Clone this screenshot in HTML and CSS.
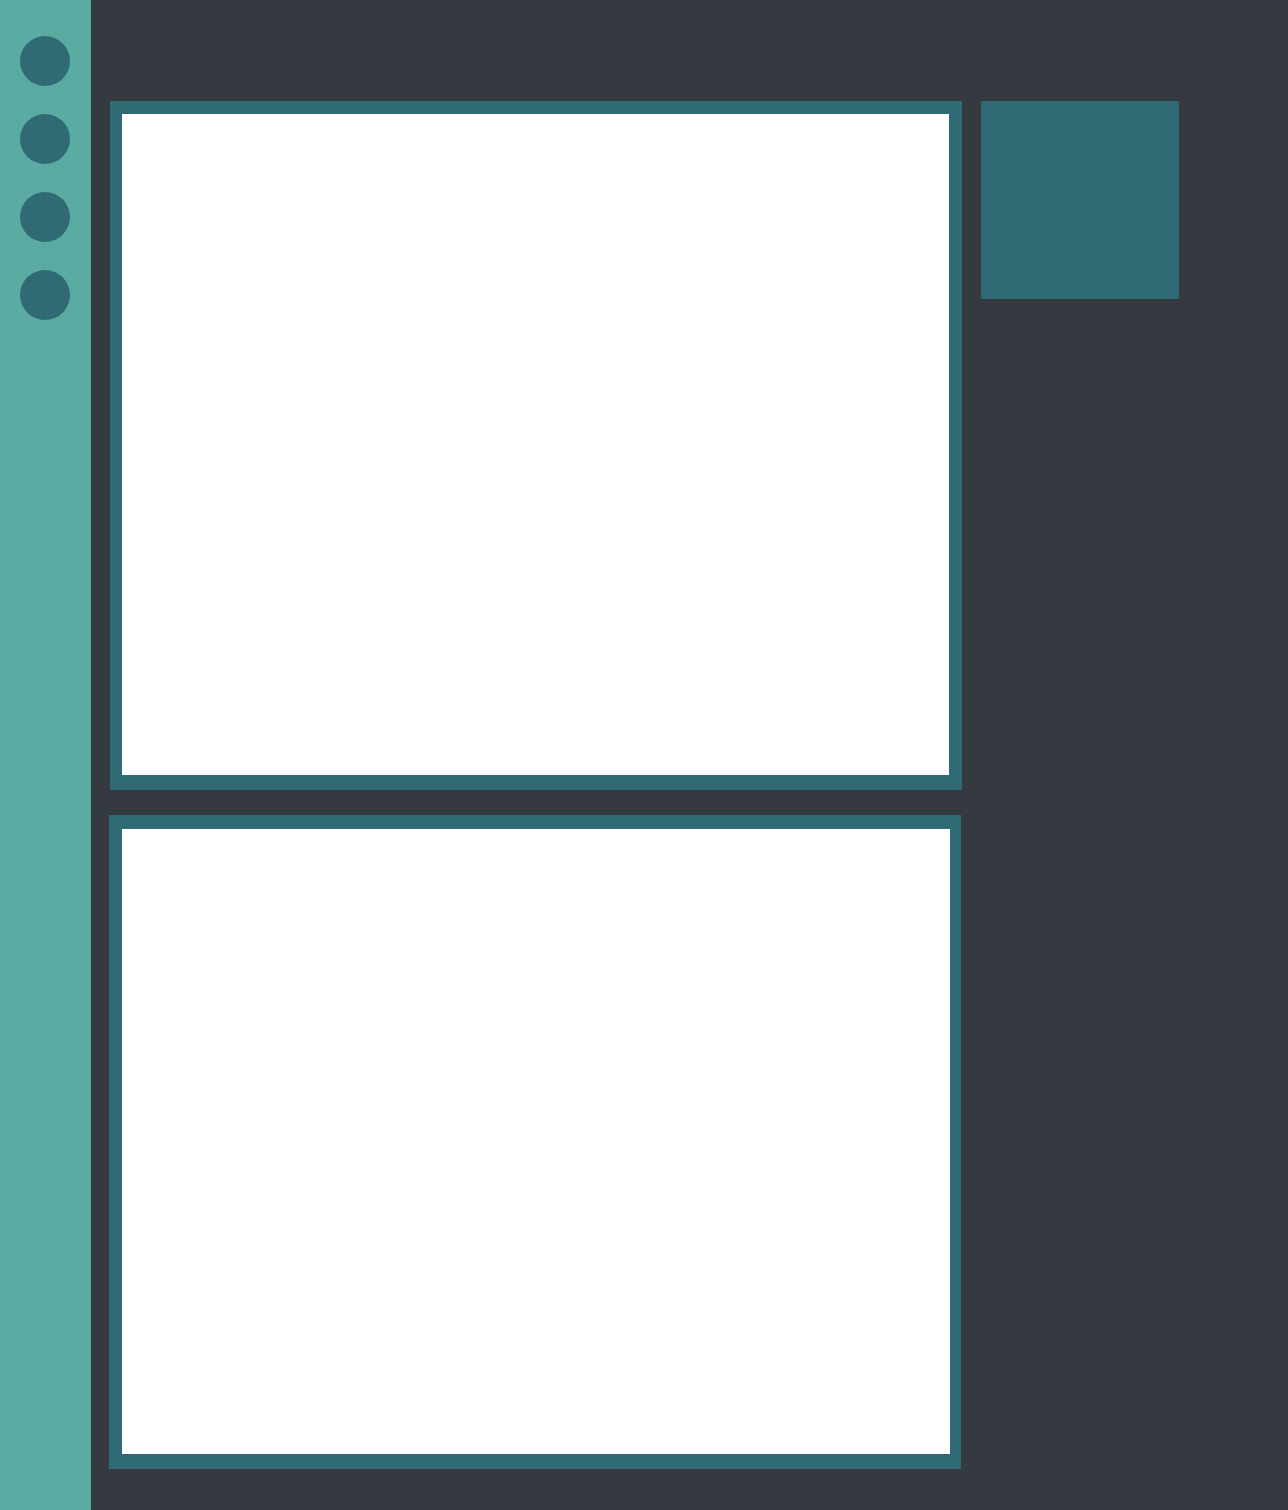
FILE: index.html
```html
<!DOCTYPE html>
<html lang="en">
<head>
    <meta charset="UTF-8">
    <meta name="viewport" content="width=device-width, initial-scale=1.0">
    <title>Board</title>
    <link rel="stylesheet" href="styles.css">
</head>
<body>
    <div class="app">
        <nav class="sidebar">
            <div class="dot"></div>
            <div class="dot"></div>
            <div class="dot"></div>
            <div class="dot"></div>
        </nav>
        <main class="main">
            <div class="panels">
                <div class="panel panel-top">
                    <div class="panel-body"></div>
                </div>
                <div class="panel panel-bottom">
                    <div class="panel-body"></div>
                </div>
            </div>
            <div class="tile"></div>
        </main>
    </div>
</body>
</html>
```

FILE: styles.css
```css
* {
    box-sizing: border-box;
}

body {
    margin: 0;
    background: #343a3f;
    font-family: 'Liberation Sans', Arial, sans-serif;
}

.app {
    display: flex;
    min-height: 1510px;
}

.sidebar {
    width: 91px;
    flex-shrink: 0;
    background: #5aaba2;
    display: flex;
    flex-direction: column;
    align-items: flex-start;
    gap: 28px;
    padding: 36px 0 0 20px;
}

.dot {
    width: 50px;
    height: 50px;
    border-radius: 50%;
    background: #306a75;
}

.main {
    display: flex;
    align-items: flex-start;
    gap: 19px;
    padding: 101px 0 0 18px;
}

.panels {
    display: flex;
    flex-direction: column;
    gap: 25px;
    width: 853px;
}

.panel {
    background: #306a75;
    display: flex;
    width: 852px;
}

.panel-top {
    height: 689px;
    margin-left: 1px;
    padding: 13px 13px 15px 12px;
}

.panel-bottom {
    height: 654px;
    padding: 14px 11px 15px 13px;
}

.panel-body {
    flex: 1;
    background: #ffffff;
}

.tile {
    width: 198px;
    height: 198px;
    background: #306a75;
}
```
